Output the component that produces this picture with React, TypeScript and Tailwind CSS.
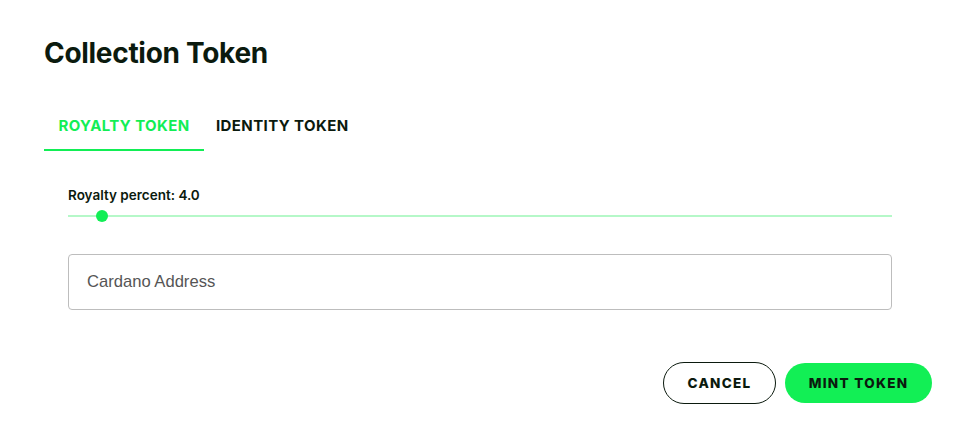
import { useState } from 'react';

export default function App() {
  const [tab, setTab] = useState(0);
  const [percent] = useState(4.0);
  const pct = (percent / 100) * 100;

  return (
    <div className="w-[959px] h-[431px] bg-white font-['Inter',sans-serif] text-[#0b1a0e]">
      <div className="pl-[44px] pr-[27px] pt-[36px]">
        <h2 className="text-[28px] leading-[34px] font-bold tracking-[-0.3px]">Collection Token</h2>

        <div className="mt-[33px] flex">
          {['ROYALTY TOKEN', 'IDENTITY TOKEN'].map((label, i) => (
            <button
              key={label}
              onClick={() => setTab(i)}
              className={`h-[48px] text-[15px] font-bold tracking-[0.4px] border-b-2 ${
                tab === i ? 'w-[160px] text-[#12ee55] border-[#12ee55]' : 'w-auto px-[12px] text-[#0b1a0e] border-transparent'
              }`}
            >
              {label}
            </button>
          ))}
        </div>

        <div className="mt-[36px] pl-[24px] pr-[40px]">
          <div className="text-[13.5px] font-semibold leading-[16px]">Royalty percent: {percent.toFixed(1)}</div>
          <div className="relative mt-[6px] h-[14px] flex items-center">
            <div className="w-full h-[2px] bg-[#b5f8c8]" />
            <div
              className="absolute w-[12px] h-[12px] rounded-full bg-[#12ee55] -translate-x-1/2 ml-[1px]"
              style={{ left: `${pct}%` }}
            />
          </div>

          <input
            placeholder="Cardano Address"
            className="mt-[31px] w-full h-[56px] border border-[#bdbdbd] rounded-[4px] px-[18px] text-[16.6px] font-['Liberation_Sans',sans-serif] placeholder:text-[#555] outline-none"
          />
        </div>

        <div className="mt-[52px] flex justify-end gap-[9px]">
          <button className="w-[113px] h-[42px] rounded-full border border-[#0b1a0e] text-[13.5px] font-extrabold tracking-[1.3px]">
            CANCEL
          </button>
          <button className="w-[147px] h-[40px] mt-[1px] rounded-full bg-[#12ef55] text-[13.5px] font-extrabold tracking-[1.3px]">
            MINT TOKEN
          </button>
        </div>
      </div>
    </div>
  );
}
